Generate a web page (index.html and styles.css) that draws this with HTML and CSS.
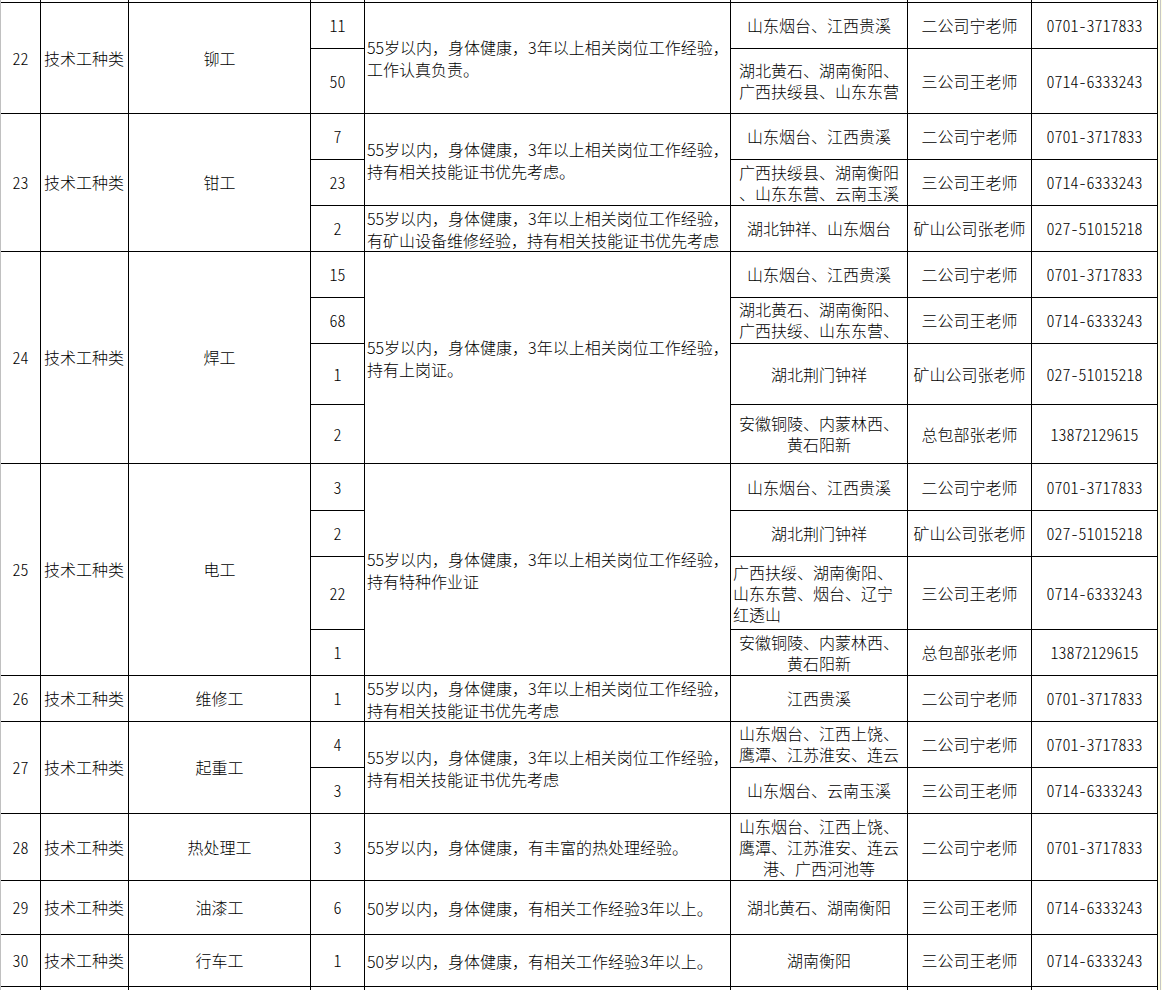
FILE: index.html
```html
<!DOCTYPE html>
<html lang="zh-CN">
<head>
<meta charset="utf-8">
<title>技术工种类招聘</title>
<link rel="stylesheet" href="styles.css">
</head>
<body>
<div class="sheet">
  <!-- top stub of previous row -->
  <div class="c"></div><div class="c"></div><div class="c"></div><div class="c"></div><div class="c"></div><div class="c"></div><div class="c"></div><div class="c"></div>

  <!-- 22 -->
  <div class="c n s2">22</div>
  <div class="c cat s2">技术工种类</div>
  <div class="c s2">铆工</div>
  <div class="c n">11</div>
  <div class="c desc s2">55岁以内，身体健康，3年以上相关岗位工作经验，<br>工作认真负责。</div>
  <div class="c">山东烟台、江西贵溪</div>
  <div class="c">二公司宁老师</div>
  <div class="c n">0701-3717833</div>

  <div class="c n">50</div>
  <div class="c">湖北黄石、湖南衡阳、<br>广西扶绥县、山东东营</div>
  <div class="c">三公司王老师</div>
  <div class="c n">0714-6333243</div>

  <!-- 23 -->
  <div class="c n s3">23</div>
  <div class="c cat s3">技术工种类</div>
  <div class="c s3">钳工</div>
  <div class="c n">7</div>
  <div class="c desc s2">55岁以内，身体健康，3年以上相关岗位工作经验，<br>持有相关技能证书优先考虑。</div>
  <div class="c">山东烟台、江西贵溪</div>
  <div class="c">二公司宁老师</div>
  <div class="c n">0701-3717833</div>

  <div class="c n">23</div>
  <div class="c">广西扶绥县、湖南衡阳<br>、山东东营、云南玉溪</div>
  <div class="c">三公司王老师</div>
  <div class="c n">0714-6333243</div>

  <div class="c n">2</div>
  <div class="c desc">55岁以内，身体健康，3年以上相关岗位工作经验，<br>有矿山设备维修经验，持有相关技能证书优先考虑</div>
  <div class="c">湖北钟祥、山东烟台</div>
  <div class="c">矿山公司张老师</div>
  <div class="c n">027-51015218</div>

  <!-- 24 -->
  <div class="c n s4">24</div>
  <div class="c cat s4">技术工种类</div>
  <div class="c s4">焊工</div>
  <div class="c n">15</div>
  <div class="c desc s4">55岁以内，身体健康，3年以上相关岗位工作经验，<br>持有上岗证。</div>
  <div class="c">山东烟台、江西贵溪</div>
  <div class="c">二公司宁老师</div>
  <div class="c n">0701-3717833</div>

  <div class="c n">68</div>
  <div class="c clip">湖北黄石、湖南衡阳、<br>广西扶绥、山东东营、<br>云南玉溪</div>
  <div class="c">三公司王老师</div>
  <div class="c n">0714-6333243</div>

  <div class="c n">1</div>
  <div class="c">湖北荆门钟祥</div>
  <div class="c">矿山公司张老师</div>
  <div class="c n">027-51015218</div>

  <div class="c n">2</div>
  <div class="c">安徽铜陵、内蒙林西、<br>黄石阳新</div>
  <div class="c">总包部张老师</div>
  <div class="c n">13872129615</div>

  <!-- 25 -->
  <div class="c n s4">25</div>
  <div class="c cat s4">技术工种类</div>
  <div class="c s4">电工</div>
  <div class="c n">3</div>
  <div class="c desc s4">55岁以内，身体健康，3年以上相关岗位工作经验，<br>持有特种作业证</div>
  <div class="c">山东烟台、江西贵溪</div>
  <div class="c">二公司宁老师</div>
  <div class="c n">0701-3717833</div>

  <div class="c n">2</div>
  <div class="c">湖北荆门钟祥</div>
  <div class="c">矿山公司张老师</div>
  <div class="c n">027-51015218</div>

  <div class="c n">22</div>
  <div class="c lft">广西扶绥、湖南衡阳、<br>山东东营、烟台、辽宁<br>红透山</div>
  <div class="c">三公司王老师</div>
  <div class="c n">0714-6333243</div>

  <div class="c n">1</div>
  <div class="c">安徽铜陵、内蒙林西、<br>黄石阳新</div>
  <div class="c">总包部张老师</div>
  <div class="c n">13872129615</div>

  <!-- 26 -->
  <div class="c n">26</div>
  <div class="c cat">技术工种类</div>
  <div class="c">维修工</div>
  <div class="c n">1</div>
  <div class="c desc">55岁以内，身体健康，3年以上相关岗位工作经验，<br>持有相关技能证书优先考虑</div>
  <div class="c">江西贵溪</div>
  <div class="c">二公司宁老师</div>
  <div class="c n">0701-3717833</div>

  <!-- 27 -->
  <div class="c n s2">27</div>
  <div class="c cat s2">技术工种类</div>
  <div class="c s2">起重工</div>
  <div class="c n">4</div>
  <div class="c desc s2">55岁以内，身体健康，3年以上相关岗位工作经验，<br>持有相关技能证书优先考虑</div>
  <div class="c clip">山东烟台、江西上饶、<br>鹰潭、江苏淮安、连云<br>港、广西河池等</div>
  <div class="c">二公司宁老师</div>
  <div class="c n">0701-3717833</div>

  <div class="c n">3</div>
  <div class="c">山东烟台、云南玉溪</div>
  <div class="c">三公司王老师</div>
  <div class="c n">0714-6333243</div>

  <!-- 28 -->
  <div class="c n">28</div>
  <div class="c cat">技术工种类</div>
  <div class="c">热处理工</div>
  <div class="c n">3</div>
  <div class="c desc">55岁以内，身体健康，有丰富的热处理经验。</div>
  <div class="c">山东烟台、江西上饶、<br>鹰潭、江苏淮安、连云<br>港、广西河池等</div>
  <div class="c">二公司宁老师</div>
  <div class="c n">0701-3717833</div>

  <!-- 29 -->
  <div class="c n">29</div>
  <div class="c cat">技术工种类</div>
  <div class="c">油漆工</div>
  <div class="c n">6</div>
  <div class="c desc">50岁以内，身体健康，有相关工作经验3年以上。</div>
  <div class="c">湖北黄石、湖南衡阳</div>
  <div class="c">三公司王老师</div>
  <div class="c n">0714-6333243</div>

  <!-- 30 -->
  <div class="c n">30</div>
  <div class="c cat">技术工种类</div>
  <div class="c">行车工</div>
  <div class="c n">1</div>
  <div class="c desc">50岁以内，身体健康，有相关工作经验3年以上。</div>
  <div class="c">湖南衡阳</div>
  <div class="c">三公司王老师</div>
  <div class="c n">0714-6333243</div>

  <!-- bottom stub of next row -->
  <div class="c end"></div><div class="c end"></div><div class="c end"></div><div class="c end"></div><div class="c end"></div><div class="c end"></div><div class="c end"></div><div class="c end"></div>
</div>
</body>
</html>
```

FILE: styles.css
```css
html, body {
  margin: 0;
  padding: 0;
}

body {
  width: 1162px;
  height: 990px;
  overflow: hidden;
  background:
    linear-gradient(to right, transparent 1160px, #c6c6c6 1160px, #c6c6c6 1161px, transparent 1161px),
    #ffffe4;
  font-family: "Noto Sans CJK SC", sans-serif;
  font-size: 16px;
  font-weight: 300;
  color: #000;
}

.sheet {
  box-sizing: border-box;
  width: 1158px;
  height: 990px;
  overflow: hidden;
  border-left: 1px solid #c0c0c0;
  background: #fff;
  display: grid;
  grid-template-columns: 40px 88px 182px 54px 366px 177px 124px 126px;
  grid-template-rows: 3px 46px 65px 46px 46px 46px 46px 46px 61px 59px 47px 46px 73px 46px 46px 46px 46px 67px 54px 52px 10px;
}

.c {
  box-sizing: border-box;
  border-right: 1px solid #000;
  border-bottom: 1px solid #000;
  display: flex;
  align-items: center;
  justify-content: center;
  text-align: center;
  overflow: hidden;
  white-space: nowrap;
  line-height: 21px;
  min-width: 0;
  min-height: 0;
}

.n {
  font-feature-settings: "hwid" 1;
}

.cat {
  justify-content: flex-start;
  padding-left: 3px;
}

.desc {
  justify-content: flex-start;
  text-align: left;
  padding-left: 2px;
  line-height: 22px;
}

.lft {
  justify-content: flex-start;
  text-align: left;
  padding-left: 2px;
}

.clip {
  align-items: flex-start;
  padding-top: 1px;
}

.end {
  border-bottom: none;
}

.s2 { grid-row: span 2; }
.s3 { grid-row: span 3; }
.s4 { grid-row: span 4; }
```
